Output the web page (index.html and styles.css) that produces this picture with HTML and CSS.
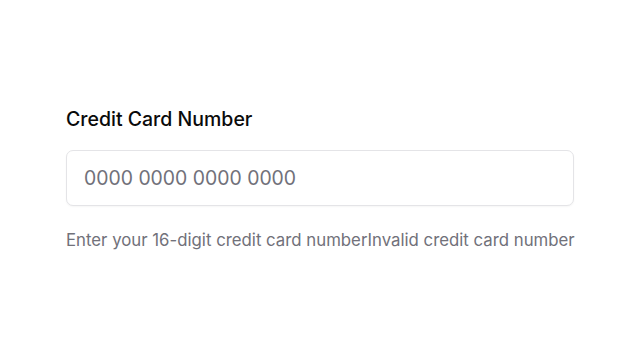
FILE: index.html
```html
<!DOCTYPE html>
<html lang="en">
<head>
<meta charset="utf-8">
<title>Credit Card Number</title>
<link rel="stylesheet" href="styles.css">
</head>
<body>
<main class="page">
  <div class="field">
    <label class="label" for="cc">Credit Card Number</label>
    <input class="input" id="cc" type="text" placeholder="0000 0000 0000 0000">
    <p class="help">Enter your 16-digit credit card number<span>Invalid credit card number</span></p>
  </div>
</main>
</body>
</html>
```
FILE: styles.css
```css
* { box-sizing: border-box; }
html, body { margin: 0; padding: 0; background: #ffffff; }
body { font-family: Inter, "Noto Sans", sans-serif; }
.page {
  height: 357px;
  display: flex;
  align-items: center;
  justify-content: center;
}
.field {
  width: 508px;
  display: flex;
  flex-direction: column;
  padding-top: 1px;
}
.label {
  font-size: 19.5px;
  font-weight: 500;
  line-height: 28px;
  color: #0a0a0a;
  margin-bottom: 17px;
}
.input {
  height: 56px;
  width: 100%;
  border: 1px solid #e4e4e7;
  border-radius: 7px;
  padding: 0 17px;
  font-family: inherit;
  font-size: 19.4px;
  color: #0a0a0a;
  background: #fff;
  outline: none;
  box-shadow: 0 1px 2px rgba(0,0,0,0.04);
}
.input::placeholder { color: #71717a; }
.help {
  margin: 0;
  margin-top: 21px;
  font-size: 16.8px;
  line-height: 26px;
  color: #71717a;
  white-space: nowrap;
}
```
